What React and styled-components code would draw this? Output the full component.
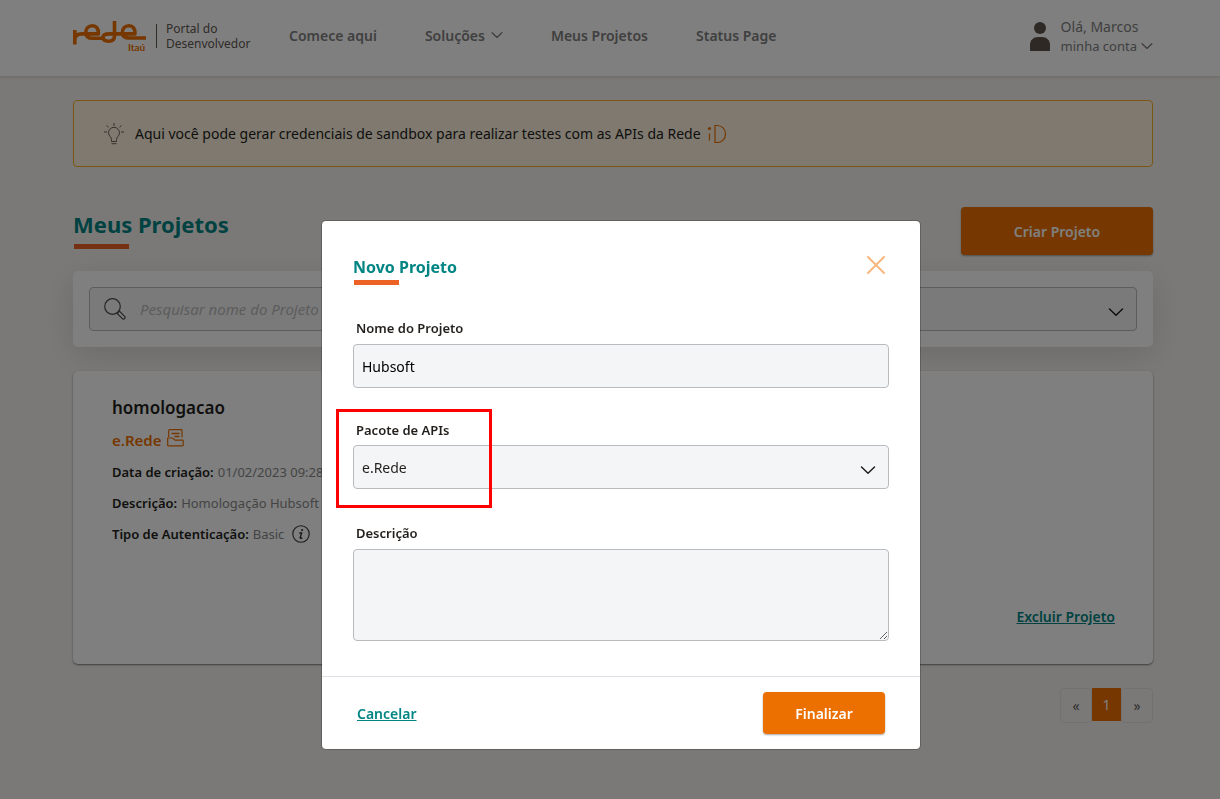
import React, { useState } from 'react';
import styled, { createGlobalStyle } from 'styled-components';

const Chevron = ({ size = 16, stroke = 1.5, className }) => (
    <svg className={className} width={size} height={size} viewBox="0 0 16 16" fill="none"
        stroke="currentColor" strokeWidth={stroke} strokeLinecap="round" strokeLinejoin="round" aria-hidden="true">
        <path d="M1.5 5 L8 11.2 L14.5 5" />
    </svg>
)

const RedeLogo = () => (
    <svg width="75" height="34" viewBox="73 19 75 34" fill="none" role="img" aria-label="Rede Itaú">
        <g stroke="#ec7000" strokeWidth="3.6" strokeLinejoin="round">
            <path d="M74.8 30 V44.5 M74.8 40 C74.8 36 77.5 33.9 82 33.9 H98.4 C98.8 28.4 96.2 25.8 92.4 25.8 C88.2 25.8 85.8 28.8 85.8 32.4 C85.8 36.4 88.6 38.2 92.6 38.2 H103" />
            <path d="M114.5 21 V36 C114.5 39.4 112.2 41.2 108.8 41.2 C105.2 41.2 103 39.8 103 37.6 C103 35.2 105.6 33.9 109 33.9 H135 C135.4 28.4 132.8 25.8 129 25.8 C124.8 25.8 122.4 28.8 122.4 32.4 C122.4 36.2 125.4 38 129.6 38 H146" />
        </g>
        <text x="128" y="51" fill="#ec7000" fontFamily="Lato, sans-serif" fontSize="10" fontWeight="700">Itaú</text>
    </svg>
)

const UserIcon = () => (
    <svg width="20" height="30" viewBox="0 0 20 30" fill="#5c524a" aria-hidden="true">
        <circle cx="10" cy="7" r="6" />
        <path d="M0 29.5 V24 C0 19 3.5 16 8 16 H12 C16.5 16 20 19 20 24 V29.5 Q20 30 19.5 30 H0.5 Q0 30 0 29.5 Z" />
    </svg>
)

const BulbIcon = () => (
    <svg width="20" height="22" viewBox="0 0 20 22" fill="none" stroke="#6b645d" aria-hidden="true">
        <path d="M7.5 18.5 V16.5 C7.5 14 4.5 13 4.5 9.8 A5.5 5.5 0 0 1 15.5 9.8 C15.5 13 12.5 14 12.5 16.5 V18.5 Z" />
        <path d="M7.5 20.7 H12.5 M10 0 V3 M0 9 H3 M17 9 H20 M2.5 2.5 L4.5 4.2 M17.5 2.5 L15.5 4.2" />
    </svg>
)

const IdIcon = () => (
    <svg width="20" height="20" viewBox="0 0 20 20" fill="none" stroke="#ec7000" strokeWidth="1.2" aria-hidden="true">
        <circle cx="2.5" cy="4.5" r="1.6" fill="#ec7000" stroke="none" />
        <path d="M2.5 9.5 V16.5 M8 1.5 H10 C15 1.5 18.5 5 18.5 10 S15 18.5 10 18.5 H8 Z" />
    </svg>
)

const SearchIcon = () => (
    <svg width="22" height="22" viewBox="0 0 22 22" fill="none" stroke="#4d4d4d" strokeWidth="1.2" aria-hidden="true">
        <circle cx="8.5" cy="8.5" r="7.8" />
        <path d="M13.2 15.4 L15.4 13.2 L20.8 18.6 Q21.6 19.6 20.6 20.6 Q19.6 21.6 18.6 20.8 Z" />
    </svg>
)

const FolderIcon = () => (
    <svg width="17" height="18" viewBox="0 0 17 18" fill="none" stroke="#ec7000" strokeWidth="1.2" aria-hidden="true">
        <path d="M1.7 8 V1.5 Q1.7 0.7 2.5 0.7 H14.2 Q15 0.7 15 1.5 V8.5" />
        <path d="M0.7 16.6 V9 H5.5 L8 11.2 H15.6 Q16.2 11.2 16.2 11.8 V16 Q16.2 16.8 15.4 16.8 H1.3 Q0.7 16.8 0.7 16.6 Z" />
        <path d="M4.5 4.5 H12.5 M7.5 7.5 H12.5" strokeWidth="1.6" />
    </svg>
)

const InfoIcon = () => (
    <svg width="18" height="18" viewBox="0 0 18 18" fill="none" stroke="#303030" aria-hidden="true">
        <circle cx="9" cy="9" r="8.2" strokeWidth="1.1" />
        <circle cx="10.1" cy="5" r="1.1" fill="#303030" stroke="none" />
        <path d="M7.3 8 H9.6 L8.2 12.6 Q8 13.8 10.3 12.8" strokeWidth="1.4" />
    </svg>
)

const CloseIcon = () => (
    <svg width="18" height="18" viewBox="0 0 18 18" stroke="#f7b780" strokeWidth="2" strokeLinecap="round" aria-hidden="true">
        <path d="M1 1 L17 17 M17 1 L1 17" />
    </svg>
)

const NewProjectModal = ({ onClose }) => {
    const [name, setName] = useState('Hubsoft')
    const [description, setDescription] = useState('')

    return (
        <Backdrop>
            <Dialog role="dialog" aria-modal="true" aria-labelledby="modal-title">
                <DialogHeader>
                    <DialogTitle id="modal-title">Novo Projeto</DialogTitle>
                    <CloseButton type="button" aria-label="Fechar" onClick={onClose}><CloseIcon /></CloseButton>
                </DialogHeader>
                <DialogBody>
                    <Field>
                        <Label htmlFor="name">Nome do Projeto</Label>
                        <TextInput id="name" type="text" value={name} onChange={e => setName(e.target.value)} />
                    </Field>
                    <SelectField>
                        <Label htmlFor="package">Pacote de APIs</Label>
                        <SelectBox>
                            <Select id="package">
                                <option>e.Rede</option>
                            </Select>
                            <SelectArrow />
                        </SelectBox>
                        <Highlight />
                    </SelectField>
                    <Field>
                        <Label htmlFor="description">Descrição</Label>
                        <TextArea id="description" value={description} onChange={e => setDescription(e.target.value)} />
                    </Field>
                </DialogBody>
                <DialogFooter>
                    <ActionLink href="#cancelar">Cancelar</ActionLink>
                    <FinishButton type="button">Finalizar</FinishButton>
                </DialogFooter>
            </Dialog>
        </Backdrop>
    )
}

const App = () => {
    const [open, setOpen] = useState(true)

    return (
        <>
            <GlobalStyle />
            <Header>
                <Brand href="#inicio">
                    <RedeLogo />
                    <BrandDivider />
                    <BrandText>Portal do<br />Desenvolvedor</BrandText>
                </Brand>
                <Nav>
                    <NavLink href="#comece">Comece aqui</NavLink>
                    <NavLink href="#solucoes">Soluções <Chevron size={12} stroke={1.8} /></NavLink>
                    <NavLink href="#projetos">Meus Projetos</NavLink>
                    <NavLink href="#status">Status Page</NavLink>
                </Nav>
                <Account type="button">
                    <UserIcon />
                    <AccountText>
                        <Hello>Olá, Marcos</Hello>
                        <AccountLine>minha conta <Chevron size={12} stroke={1.8} /></AccountLine>
                    </AccountText>
                </Account>
            </Header>
            <Main>
                <Notice>
                    <BulbIcon />
                    <NoticeText>Aqui você pode gerar credenciais de sandbox para realizar testes com as APIs da Rede</NoticeText>
                    <IdIcon />
                </Notice>
                <TitleRow>
                    <PageTitle>Meus Projetos</PageTitle>
                    <CreateButton type="button" onClick={() => setOpen(true)}>Criar Projeto</CreateButton>
                </TitleRow>
                <SearchCard>
                    <SearchBox>
                        <SearchIcon />
                        <SearchInput type="search" aria-label="Pesquisar" placeholder="Pesquisar nome do Projeto" />
                    </SearchBox>
                    <SelectBox>
                        <Select aria-label="Filtro">
                            <option></option>
                        </Select>
                        <SelectArrow />
                    </SelectBox>
                </SearchCard>
                <ProjectCard>
                    <ProjectName>homologacao</ProjectName>
                    <ProjectApi>e.Rede <FolderIcon /></ProjectApi>
                    <Details>
                        <DetailRow><dt>Data de criação:</dt><dd>01/02/2023 09:28</dd></DetailRow>
                        <DetailRow><dt>Descrição:</dt><dd>Homologação Hubsoft</dd></DetailRow>
                        <DetailRow><dt>Tipo de Autenticação:</dt><dd>Basic <InfoIcon /></dd></DetailRow>
                    </Details>
                    <CardFooter>
                        <ActionLink href="#excluir">Excluir Projeto</ActionLink>
                    </CardFooter>
                </ProjectCard>
                <Pagination aria-label="Páginas">
                    <PageButton type="button">«</PageButton>
                    <CurrentPage type="button" aria-current="page">1</CurrentPage>
                    <PageButton type="button">»</PageButton>
                </Pagination>
            </Main>
            {open && <NewProjectModal onClose={() => setOpen(false)} />}
        </>
    )
}

export default App;

const GlobalStyle = createGlobalStyle`
    * {
        box-sizing: border-box;
    }
    body {
        margin: 0;
        background: #f7f3ef;
        color: #231f1c;
        font-family: 'Noto Sans', sans-serif;
        font-size: 14px;
    }
    button, input, select, textarea {
        font: inherit;
        color: inherit;
    }
    svg {
        flex: none;
    }
`

const Header = styled.header`
    display: flex;
    align-items: center;
    height: 76px;
    padding: 0 67px 4px 73px;
    background: #fff;
    box-shadow: 0 1px 3px rgba(60, 40, 60, 0.2);
`

const Brand = styled.a`
    display: flex;
    align-items: center;
    gap: 8px;
    width: 182px;
    color: #605850;
    text-decoration: none;
`

const BrandDivider = styled.span`
    width: 1px;
    height: 24px;
    background: #605850;
`

const BrandText = styled.span`
    padding-left: 1px;
    font-size: 12px;
    line-height: 15px;
`

const Nav = styled.nav`
    display: flex;
    flex: 1;
    gap: 48px;
    margin-left: 34px;
    padding-bottom: 2px;
`

const NavLink = styled.a`
    display: flex;
    align-items: center;
    gap: 6px;
    color: #808080;
    font-weight: 600;
    text-decoration: none;
    white-space: nowrap;
`

const Account = styled.button`
    display: flex;
    align-items: center;
    gap: 11px;
    padding: 0;
    border: none;
    background: none;
    color: #808080;
    text-align: left;
`

const AccountText = styled.span`
    display: flex;
    flex-direction: column;
`

const Hello = styled.span`
    font-size: 14px;
    line-height: 20px;
`

const AccountLine = styled.span`
    display: flex;
    align-items: center;
    gap: 4px;
    font-size: 13px;
    line-height: 18px;
`

const Main = styled.main`
    padding: 24px 67px 24px 73px;
`

const Notice = styled.div`
    display: flex;
    align-items: center;
    height: 67px;
    padding: 0 30px;
    border: 1px solid #f5ae28;
    border-radius: 4px;
    background: #fef2de;
`

const NoticeText = styled.p`
    margin: 0 6px 0 11px;
`

const TitleRow = styled.div`
    display: flex;
    justify-content: space-between;
    align-items: flex-start;
    margin-top: 40px;
`

const PageTitle = styled.h1`
    margin: 0;
    color: #008583;
    font-size: 22px;
    line-height: 34px;

    &::after {
        content: '';
        display: block;
        width: 55px;
        height: 5px;
        margin: 3px 0 0 1px;
        background: #ec6224;
    }
`

const PrimaryButton = styled.button`
    border: none;
    border-radius: 4px;
    background: #ec7000;
    box-shadow: 0 1px 2px rgba(0, 0, 0, 0.35);
    color: #fff;
    font-weight: 600;
`

const CreateButton = styled(PrimaryButton)`
    width: 192px;
    height: 48px;
`

const FinishButton = styled(PrimaryButton)`
    width: 122px;
    height: 42px;
`

const Card = styled.section`
    border-radius: 5px;
    background: #fff;
`

const SearchCard = styled(Card)`
    display: flex;
    gap: 16px;
    margin-top: 16px;
    padding: 16px;
    box-shadow: 0 8px 32px rgba(0, 0, 0, 0.12);

    & > * {
        flex: 1;
    }
`

const SearchBox = styled.div`
    display: flex;
    align-items: center;
    gap: 14px;
    height: 44px;
    padding: 0 14px;
    border: 1px solid #b9bbbe;
    border-radius: 4px;
    background: #f4f5f7;
`

const SearchInput = styled.input`
    flex: 1;
    min-width: 0;
    padding: 0;
    border: none;
    outline: none;
    background: none;
    font-size: 15px;

    &::placeholder {
        color: #bababa;
        font-style: italic;
    }
`

const SelectBox = styled.div`
    position: relative;
`

const Select = styled.select`
    display: block;
    width: 100%;
    height: 44px;
    padding: 0 8px;
    border: 1px solid #b9bbbe;
    border-radius: 4px;
    background: #f4f5f7;
    appearance: none;
`

const SelectArrow = styled(Chevron)`
    position: absolute;
    top: 17px;
    right: 13px;
    pointer-events: none;
`

const ProjectCard = styled(Card)`
    display: flex;
    flex-direction: column;
    min-height: 293px;
    margin-top: 24px;
    padding: 24px 38px 38px 39px;
    box-shadow: 0 1px 2px rgba(0, 0, 0, 0.5);
`

const ProjectName = styled.h2`
    margin: 0;
    font-size: 17px;
    font-weight: 600;
    line-height: 26px;
`

const ProjectApi = styled.p`
    display: flex;
    gap: 5px;
    margin: 8px 0 0;
    color: #ec7000;
    font-size: 15px;
    font-weight: 600;
    line-height: 22px;
`

const Details = styled.dl`
    display: flex;
    flex-direction: column;
    gap: 9px;
    margin: 10px 0 0;
    font-size: 13px;
`

const DetailRow = styled.div`
    display: flex;
    gap: 4px;
    line-height: 22px;

    dt {
        font-weight: 600;
    }
    dd {
        display: flex;
        align-items: center;
        gap: 8px;
        margin: 0;
        color: #888;
    }
`

const CardFooter = styled.div`
    display: flex;
    justify-content: flex-end;
    margin-top: auto;
`

const ActionLink = styled.a`
    color: #008583;
    font-weight: 600;
`

const Pagination = styled.nav`
    display: flex;
    justify-content: flex-end;
    align-items: flex-start;
    margin-top: 24px;
`

const PageButton = styled.button`
    width: 32px;
    height: 35px;
    padding: 0;
    border: 1px solid #dee2e6;
    border-radius: 4px;
    background: none;
    color: #5f5f5f;
`

const CurrentPage = styled(PageButton)`
    width: 29px;
    height: 33px;
    border: none;
    border-radius: 0;
    background: #ec7000;
    color: #fff;
`

const Backdrop = styled.div`
    position: fixed;
    inset: 0;
    display: flex;
    justify-content: center;
    align-items: flex-start;
    padding: 220px 0 0 22px;
    background: rgba(0, 0, 0, 0.5);
`

const Dialog = styled.div`
    width: 100%;
    max-width: 600px;
    border: 1px solid rgba(0, 0, 0, 0.2);
    border-radius: 5px;
    background: #fff;
    background-clip: padding-box;
`

const DialogHeader = styled.div`
    display: flex;
    justify-content: space-between;
    align-items: flex-start;
    padding: 35px 35px 0 31px;
`

const DialogTitle = styled.h2`
    margin: 0;
    color: #008583;
    font-size: 16px;
    line-height: 22px;

    &::after {
        content: '';
        display: block;
        width: 45px;
        height: 5px;
        margin: 2px 0 0 1px;
        background: #ec6224;
    }
`

const CloseButton = styled.button`
    display: flex;
    padding: 0;
    border: none;
    background: none;
`

const DialogBody = styled.div`
    display: flex;
    flex-direction: column;
    gap: 32px;
    padding: 33px 31px 35px;
`

const Field = styled.div`
    position: relative;
    display: flex;
    flex-direction: column;
    gap: 6px;
`

const SelectField = styled(Field)`
    gap: 5px;
    margin-bottom: 2px;
`

const Label = styled.label`
    padding-left: 3px;
    font-size: 13px;
    font-weight: 600;
    line-height: 20px;
`

const TextInput = styled.input`
    width: 100%;
    height: 44px;
    padding: 0 8px;
    border: 1px solid #b9bbbe;
    border-radius: 4px;
    background: #f4f5f7;
    color: #000;
`

const TextArea = styled.textarea`
    display: block;
    width: 100%;
    height: 92px;
    padding: 8px;
    border: 1px solid #b9bbbe;
    border-radius: 4px;
    background: #f4f5f7;
    resize: vertical;
`

const Highlight = styled.span`
    position: absolute;
    top: -11px;
    left: -17px;
    width: 156px;
    height: 99px;
    border: 3px solid #f00;
    pointer-events: none;
`

const DialogFooter = styled.div`
    display: flex;
    justify-content: space-between;
    align-items: center;
    padding: 15px 35px;
    border-top: 1px solid #dee2e6;
`
